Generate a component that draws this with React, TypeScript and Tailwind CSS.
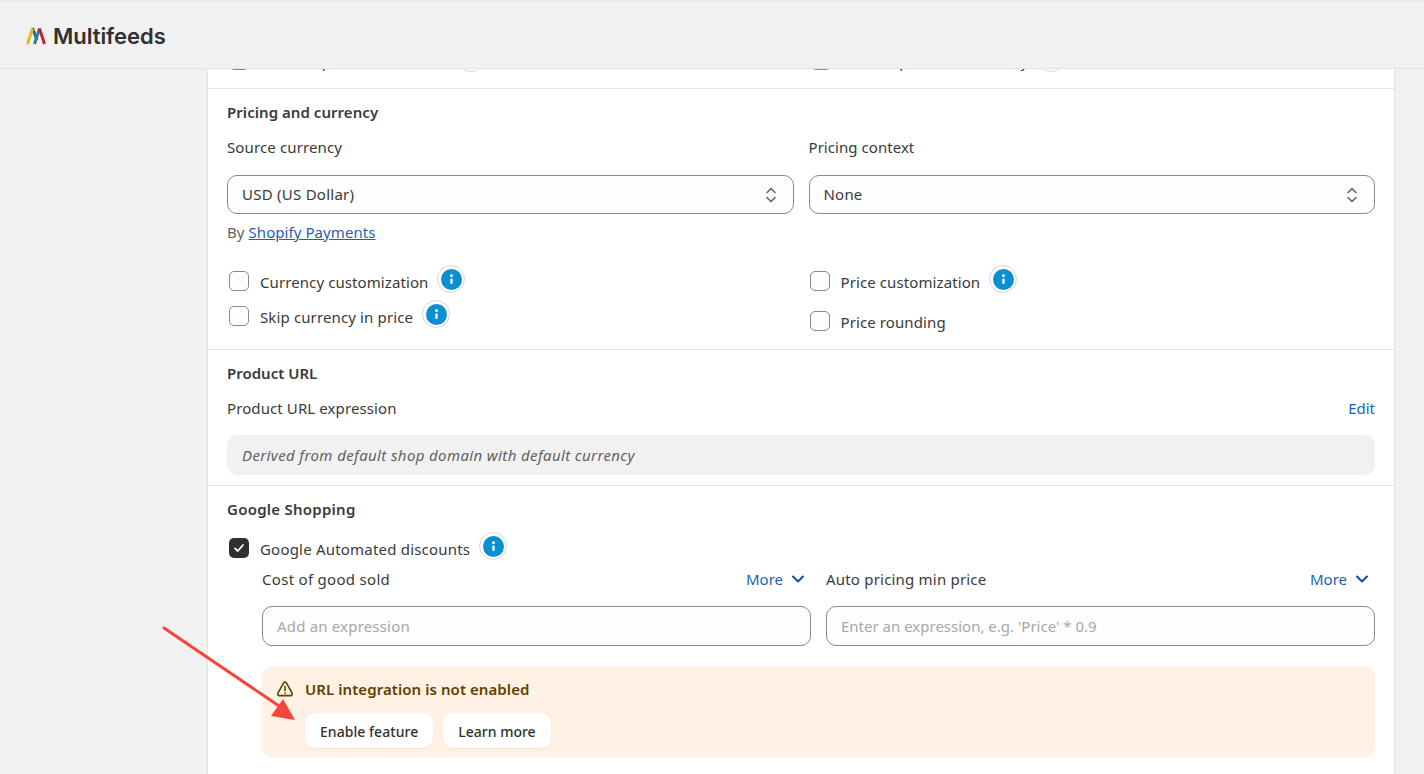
import React from "react";

const font = { fontFamily: '"Noto Sans", sans-serif' };

function Info() {
  return (
    <span className="flex h-[28px] w-[28px] shrink-0 items-center justify-center rounded-full border border-[#d8d8d8] bg-white">
      <svg width="21" height="21" viewBox="0 0 20 20">
        <circle cx="10" cy="10" r="10" fill="#0a8fd1" />
        <circle cx="10" cy="6.4" r="1.4" fill="#fff" />
        <rect x="8.9" y="9" width="2.2" height="5.4" rx="1" fill="#fff" />
      </svg>
    </span>
  );
}

function Box({ checked = false }: { checked?: boolean }) {
  return checked ? (
    <span className="flex h-5 w-5 shrink-0 items-center justify-center rounded-[5px] bg-[#303030]">
      <svg width="14" height="14" viewBox="0 0 14 14" fill="none">
        <path d="M3 7.4 5.8 10 11 4" stroke="#fff" strokeWidth="1.8" strokeLinecap="round" strokeLinejoin="round" />
      </svg>
    </span>
  ) : (
    <span className="h-5 w-5 shrink-0 rounded-[5px] border border-[#8a8a8a] bg-[#fdfdfd]" />
  );
}

function Check({ label, checked, info, className = "", tracking = "" }: { label: string; checked?: boolean; info?: boolean; className?: string; tracking?: string }) {
  return (
    <div className={`flex h-5 items-center pl-[2px] ${className}`}>
      <Box checked={checked} />
      <span className={`ml-[11px] mt-[2px] text-[15px] leading-5 text-[#3a3a3a] ${tracking}`}>{label}</span>
      {info && <span className="ml-[9px] -mt-[4px]"><Info /></span>}
    </div>
  );
}

function Updown() {
  return (
    <svg width="14" height="20" viewBox="0 0 14 20" fill="none" stroke="#6a6a6a" strokeWidth="1.7" strokeLinecap="round" strokeLinejoin="round">
      <path d="M3 7.5 7 3.5l4 4" />
      <path d="M3 12.5l4 4 4-4" />
    </svg>
  );
}

function Select({ value, tracking = "" }: { value: string; tracking?: string }) {
  return (
    <div className="flex h-[39px] items-center justify-between rounded-[10px] border border-[#8a8a8a] bg-[#fdfdfd] pl-[14px] pr-[15px] text-[15px] text-[#3a3a3a]">
      <span className={tracking}>{value}</span>
      <Updown />
    </div>
  );
}

function More() {
  return (
    <span className="flex items-center gap-[8px] pr-[6px] text-[15px] leading-5 text-[#1f5fb8]">
      More
      <svg width="14" height="14" viewBox="0 0 14 14" fill="none" stroke="#0b4fb0" strokeWidth="2" strokeLinecap="round" strokeLinejoin="round">
        <path d="M2 4.5 7 9.5l5-5" />
      </svg>
    </span>
  );
}

function Expr({ label, placeholder, tracking = "", phTracking = "" }: { label: string; placeholder: string; tracking?: string; phTracking?: string }) {
  return (
    <div className="min-w-0 flex-1">
      <div className="flex h-5 items-center justify-between text-[15px] leading-5 text-[#3a3a3a]">
        <span className={tracking}>{label}</span>
        <More />
      </div>
      <div className="mt-[17px] flex h-[40px] items-center rounded-[10px] border border-[#8a8a8a] bg-[#fdfdfd] px-[14px] text-[15px] text-[#a8a8a8]">
        <span className={phTracking}>{placeholder}</span>
      </div>
    </div>
  );
}

function Logo() {
  return (
    <svg width="22" height="20" viewBox="0 0 22 20" fill="none" strokeWidth="3" strokeLinecap="butt">
      <path d="M7.5 3 12 15" stroke="#1d6f93" />
      <path d="M9.5 19 14.5 3.5" stroke="#2a7fa5" />
      <path d="M2.5 19 7.5 3.5" stroke="#e9b91c" />
      <path d="M14.5 3.5 19.5 19" stroke="#c8202f" />
    </svg>
  );
}

export default function App() {
  return (
    <div className="relative flex h-[774px] w-[1424px] flex-col overflow-hidden bg-[#f1f1f1]" style={font}>
      <header className="flex h-[69px] shrink-0 items-center border-b border-[#e3e3e3] border-t-2 border-t-[#ebebeb] pl-[25px]">
        <Logo />
        <span className="ml-[6px] mt-[2px] text-[22px] font-semibold tracking-[-0.05px] text-[#303030]" style={{ fontFamily: "Inter, sans-serif" }}>
          Multifeeds
        </span>
      </header>

      <main className="min-h-0 flex-1 overflow-hidden pl-[207px] pr-[29px]">
        <div className="h-[800px] border-x border-[#e3e3e3] bg-white">
          <section className="relative h-[20px] overflow-hidden border-b border-[#e3e3e3]">
            <div className="grid grid-cols-2 gap-x-[15px] px-[19px]">
              <div className="-mt-[19px]">
                <Check label="Include product variants" tracking="tracking-[0.68px]" info />
              </div>
              <div className="-mt-[19px]">
                <Check label="Include product inventory" tracking="tracking-[0.18px]" info />
              </div>
            </div>
          </section>

          <section className="h-[261px] border-b border-[#e3e3e3] px-[19px] pt-[13px]">
            <h2 className="text-[15px] font-semibold leading-5 tracking-[0.05px] text-[#3a3a3a]">Pricing and currency</h2>
            <div className="mt-[15px] grid grid-cols-2 gap-x-[15px]">
              <div>
                <div className="text-[15px] leading-5 tracking-[0.13px] text-[#3a3a3a]">Source currency</div>
                <div className="mt-[18px]"><Select value="USD (US Dollar)" tracking="tracking-[0.25px]" /></div>
                <div className="mt-[8px] text-[15px] leading-5 tracking-[0.07px] text-[#616161]">
                  By <span className="text-[#1f5fb8] underline">Shopify Payments</span>
                </div>
                <Check className="mt-[29px]" label="Currency customization" tracking="tracking-[0.09px]" info />
                <Check className="mt-[15px]" label="Skip currency in price" tracking="tracking-[0.13px]" info />
              </div>
              <div>
                <div className="text-[15px] leading-5 tracking-[0.05px] text-[#3a3a3a]">Pricing context</div>
                <div className="mt-[18px]"><Select value="None" tracking="tracking-[0.2px]" /></div>
                <div className="-ml-px">
                  <Check className="mt-[57px]" label="Price customization" tracking="tracking-[0.1px]" info />
                  <Check className="mt-[20px]" label="Price rounding" tracking="tracking-[0.1px]" />
                </div>
              </div>
            </div>
          </section>

          <section className="h-[136px] border-b border-[#e3e3e3] px-[19px] pt-[13px]">
            <h2 className="text-[15px] font-semibold leading-5 text-[#3a3a3a]">Product URL</h2>
            <div className="mt-[15px] flex h-5 items-center justify-between text-[15px] leading-5">
              <span className="tracking-[0.1px] text-[#3a3a3a]">Product URL expression</span>
              <span className="text-[#1f5fb8]">Edit</span>
            </div>
            <div className="mt-[17px] flex h-[40px] items-center rounded-[10px] bg-[#f1f1f1] px-[15px] text-[15px] italic tracking-[0.37px] text-[#616161]">
              Derived from default shop domain with default currency
            </div>
          </section>

          <section className="px-[19px] pt-[13px]">
            <h2 className="text-[15px] font-semibold leading-5 tracking-[0.25px] text-[#3a3a3a]">Google Shopping</h2>
            <Check className="mt-[19px]" label="Google Automated discounts" tracking="tracking-[0.2px]" checked info />
            <div className="pl-[35px]">
              <div className="mt-[11px] flex gap-[15px]">
                <Expr label="Cost of good sold" tracking="tracking-[0.3px]" phTracking="tracking-[0.18px]" placeholder="Add an expression" />
                <Expr label="Auto pricing min price" tracking="tracking-[0.2px]" placeholder="Enter an expression, e.g. 'Price' * 0.9" />
              </div>
              <div className="mt-[20px] h-[91px] rounded-[10px] bg-[#fff1e3] pl-[14px] pt-[13px]">
                <div className="flex h-5 items-center gap-[11px]">
                  <svg width="18" height="18" viewBox="0 0 18 18" fill="none" stroke="#5e4200" strokeWidth="1.6" strokeLinejoin="round" strokeLinecap="round">
                    <path d="M7.6 2.8 1.9 13.2c-.6 1.1.2 2.4 1.4 2.4h11.4c1.2 0 2-1.3 1.4-2.4L10.4 2.8c-.6-1.1-2.2-1.1-2.8 0Z" />
                    <path d="M9 6.6v4" />
                    <path d="M9 13.1v.1" />
                  </svg>
                  <span className="text-[15px] font-semibold tracking-[0.07px] text-[#5e4200]">URL integration is not enabled</span>
                </div>
                <div className="ml-[29px] mt-[14px] flex gap-[10px]">
                  <span className="flex h-[35px] items-center rounded-[10px] bg-white px-[15px] pt-px text-[14px] font-medium tracking-[0.05px] text-[#303030] shadow-[0_1px_2px_rgba(0,0,0,0.06)]">Enable feature</span>
                  <span className="flex h-[35px] items-center rounded-[10px] bg-white px-[15px] pt-px text-[14px] font-medium text-[#303030] shadow-[0_1px_2px_rgba(0,0,0,0.06)]">Learn more</span>
                </div>
              </div>
            </div>
          </section>
        </div>
      </main>

      <svg className="pointer-events-none absolute left-0 top-0" width="1424" height="774" viewBox="0 0 1424 774" fill="none">
        <path d="M164 628 282 708" stroke="#f7443a" strokeWidth="3" strokeLinecap="round" />
        <path d="M295 720 271 716 283 699Z" fill="#f7443a" />
      </svg>
    </div>
  );
}
